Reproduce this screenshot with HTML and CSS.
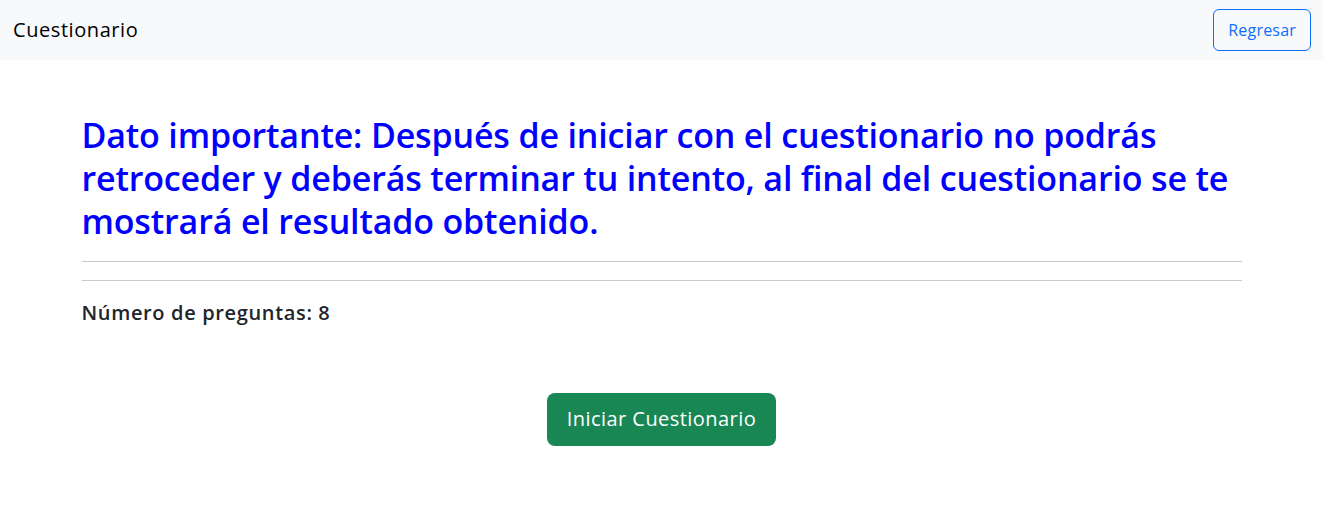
FILE: index.html
```html
<!DOCTYPE html>
<html lang="es">
<head>
<meta charset="utf-8">
<title>Cuestionario</title>
<link rel="stylesheet" href="styles.css">
</head>
<body>
<nav class="navbar">
  <span class="brand">Cuestionario</span>
  <a class="btn-outline" href="#">Regresar</a>
</nav>
<main class="container">
  <h1 class="notice">Dato importante: Después de iniciar con el cuestionario no podrás retroceder y deberás terminar tu intento, al final del cuestionario se te mostrará el resultado obtenido.</h1>
  <hr class="rule rule-first">
  <hr class="rule rule-second">
  <h5 class="count">Número de preguntas: 8</h5>
  <div class="actions">
    <a class="btn-start" href="#">Iniciar Cuestionario</a>
  </div>
</main>
</body>
</html>
```
FILE: styles.css
```css
* { box-sizing: border-box; }
body {
  margin: 0;
  font-family: "Open Sans", "Noto Sans", sans-serif;
  color: #212529;
  background: #fff;
  font-size: 16px;
  line-height: 1.5;
}
.navbar {
  height: 60px;
  background: #f8f9fa;
  display: flex;
  align-items: center;
  justify-content: space-between;
  padding: 0 12px 0 13px;
}
.brand {
  font-size: 20px;
  color: #000;
  letter-spacing: 0.57px;
}
.btn-outline {
  display: inline-block;
  color: #0d6efd;
  border: 1px solid #0d6efd;
  border-radius: 6px;
  padding: 8px 14px 8px 14px;
  font-size: 16px;
  line-height: 24px;
  text-decoration: none;
  letter-spacing: 0.2px;
}
.container {
  max-width: 1160px;
  margin: 0 auto;
  padding-top: 54px;
}
.notice {
  margin: 0;
  font-size: 34px;
  line-height: 43px;
  font-weight: 600;
  color: #0000ff;
  letter-spacing: -0.16px;
}
.rule {
  border: 0;
  border-top: 1px solid #c9c9c9;
  margin: 0;
}
.rule-first { margin-top: 18px; }
.rule-second { margin-top: 18px; }
.count {
  margin: 20px 0 0;
  font-size: 20px;
  line-height: 24px;
  font-weight: 600;
  letter-spacing: 0.65px;
}
.actions {
  display: flex;
  justify-content: center;
  margin-top: 68px;
}
.btn-start {
  display: inline-block;
  background: #198754;
  color: #fff;
  border-radius: 8px;
  padding: 11px 20px 12px;
  font-size: 20px;
  line-height: 30px;
  text-decoration: none;
  letter-spacing: 0.45px;
}
```
